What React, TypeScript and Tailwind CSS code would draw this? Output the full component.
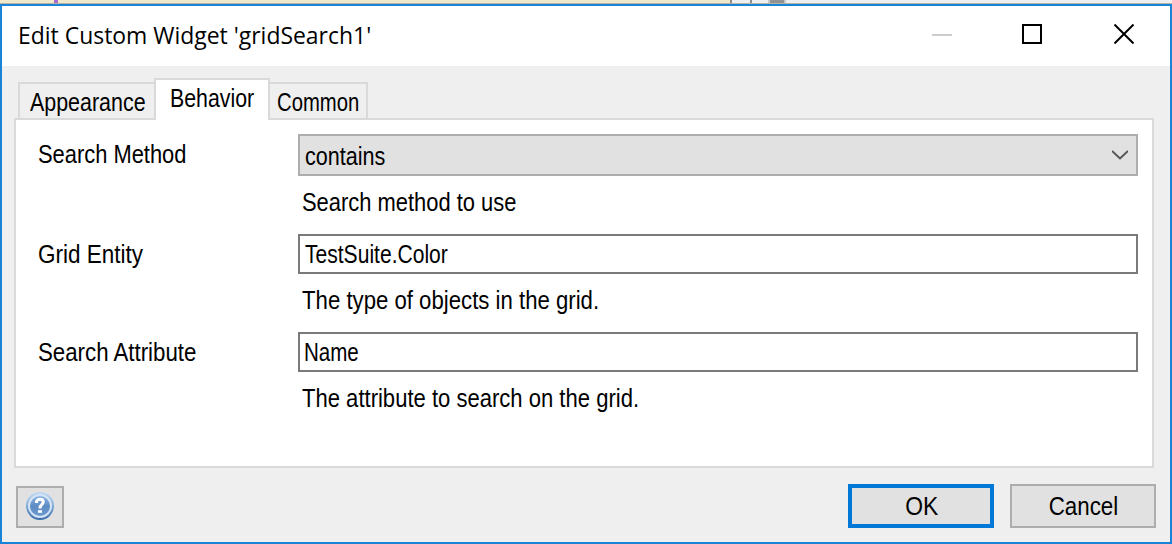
import type { ReactNode } from 'react';

function Label({ children, className }: { children: ReactNode; className: string }) {
  return (
    <span className={`block w-max whitespace-nowrap text-[26px] leading-[30px] ${className}`}>
      {children}
    </span>
  );
}

function HelpIcon() {
  return (
    <svg width="28" height="28" viewBox="0 0 28 28" className="-mt-0.5">
      <defs>
        <linearGradient id="rim" x1="0" y1="0" x2="0" y2="1">
          <stop offset="0" stopColor="#c3dbf5" />
          <stop offset="0.5" stopColor="#83abd9" />
          <stop offset="1" stopColor="#3768ab" />
        </linearGradient>
        <linearGradient id="core" x1="0" y1="0" x2="0" y2="1">
          <stop offset="0" stopColor="#8db5e2" />
          <stop offset="0.5" stopColor="#5d8cc4" />
          <stop offset="1" stopColor="#6c9ace" />
        </linearGradient>
      </defs>
      <circle cx="14" cy="14" r="14" fill="url(#rim)" />
      <circle cx="14" cy="14" r="12" fill="#d5e4f5" />
      <circle cx="14" cy="14" r="10" fill="url(#core)" />
      <path d="M10.5 11V9.5Q11.5 7.3 14 7.3Q17.2 7.3 17.2 10Q17.2 11.7 15.7 12.8Q14 14 14 16.5" fill="none" stroke="#fff" strokeWidth="3" />
      <path d="M12 18.2h4v2.6h-4z" fill="#fff" />
    </svg>
  );
}

export default function App() {
  return (
    <div className="flex h-[544px] w-[1172px] flex-col overflow-hidden bg-[#efefef] font-['Liberation_Sans',sans-serif] text-black">
      <div className="flex h-1 shrink-0 border-b border-[#b7b2a2] bg-[#efefef]">
        <div className="w-[54px] bg-[#f0e8cb]" />
        <div className="h-[3px] w-1 bg-[#a46bd0]" />
        <div className="w-[672px] bg-[#f0e8cb]" />
        <div className="w-[2px] bg-[#8c8c8c]" />
        <div className="w-[18px]" />
        <div className="w-[2px] bg-[#8c8c8c]" />
        <div className="w-4" />
        <div className="w-[18px] border-x-2 border-[#c8c8c8] bg-[#929292]" />
      </div>
      <div className="flex h-[540px] flex-col border-2 border-[#1883d7]">
        <header className="flex h-[60px] shrink-0 justify-between bg-white pl-4">
          <h1 className="mt-3 w-max origin-left scale-x-[0.936] whitespace-nowrap font-['Open_Sans',sans-serif] text-[24.5px] leading-[34px]">
            Edit Custom Widget 'gridSearch1'
          </h1>
          <div className="flex pr-9 pt-[18px]">
            <svg width="20" height="20" viewBox="0 0 20 20" className="mr-[70px]"><path d="M0 11h20" stroke="#ccc" strokeWidth="2" /></svg>
            <svg width="20" height="20" viewBox="0 0 20 20" className="mr-[72px]"><path d="M1 1h18v18H1z" fill="none" stroke="#000" strokeWidth="2" /></svg>
            <svg width="20" height="20" viewBox="0 0 20 20"><path d="M.5.5l19 19M19.5.5l-19 19" fill="none" stroke="#000" strokeWidth="2" /></svg>
          </div>
        </header>
        <div className="flex h-[54px] shrink-0 items-end pl-4">
          <div className="h-[38px] w-[136px] border-2 border-r-0 border-[#d9d9d9] pl-2.5 pt-[3px]"><Label className="origin-left scale-x-[0.824]">Appearance</Label></div>
          <div className="z-10 h-[42px] w-[116px] border-2 border-b-0 border-[#d9d9d9] bg-white pl-3.5 pt-[3px]"><Label className="origin-left scale-x-[0.82]">Behavior</Label></div>
          <div className="h-[38px] w-[98px] border-2 border-l-0 border-[#d9d9d9] pl-[7px] pt-[3px]"><Label className="origin-left scale-x-[0.78]">Common</Label></div>
        </div>
        <main className="-mt-0.5 ml-3 mr-4 grid h-[350px] shrink-0 grid-cols-[260px_1fr] grid-rows-[100px_98px_98px] border-2 border-[#d9d9d9] bg-white pl-[22px] pr-3.5 pt-3.5">
          <Label className="origin-left scale-x-[0.842] pt-[5px]">Search Method</Label>
          <div>
            <div className="flex h-[42px] items-center justify-between border-2 border-[#adadad] bg-[#e1e1e1] pl-[5px] pr-2">
              <Label className="origin-left scale-x-[0.83] pt-0.5">contains</Label>
              <svg width="16" height="10" viewBox="0 0 16 10"><path d="M0 1l8 7.5L16 1" fill="none" stroke="#555" strokeWidth="2" /></svg>
            </div>
            <Label className="ml-1 mt-[11px] origin-left scale-x-[0.843]">Search method to use</Label>
          </div>
          <Label className="origin-left scale-x-[0.865] pt-[5px]">Grid Entity</Label>
          <div>
            <div className="h-10 border-2 border-[#7a7a7a] pl-[5px] pt-[3px]"><Label className="origin-left scale-x-[0.81]">TestSuite.Color</Label></div>
            <Label className="ml-1 mt-[11px] origin-left scale-x-[0.853]">The type of objects in the grid.</Label>
          </div>
          <Label className="origin-left scale-x-[0.856] pt-[5px]">Search Attribute</Label>
          <div>
            <div className="h-10 border-2 border-[#7a7a7a] pl-1 pt-[3px]"><Label className="origin-left scale-x-[0.79]">Name</Label></div>
            <Label className="ml-1 mt-[11px] origin-left scale-x-[0.848]">The attribute to search on the grid.</Label>
          </div>
        </main>
        <footer className="flex items-end gap-4 pl-3.5 pr-3.5 pt-4">
          <button className="mr-auto flex h-[42px] w-12 items-center justify-center border-2 border-[#adadad] bg-[#e1e1e1]"><HelpIcon /></button>
          <button className="flex h-11 w-[146px] items-center justify-center border-4 border-[#0078d7] bg-[#e1e1e1] pl-0.5"><Label className="-mt-px origin-center scale-x-[0.88]">OK</Label></button>
          <button className="flex h-11 w-[146px] items-center justify-center border-2 border-[#adadad] bg-[#e1e1e1]"><Label className="-mt-px origin-center scale-x-[0.86]">Cancel</Label></button>
        </footer>
      </div>
    </div>
  );
}
